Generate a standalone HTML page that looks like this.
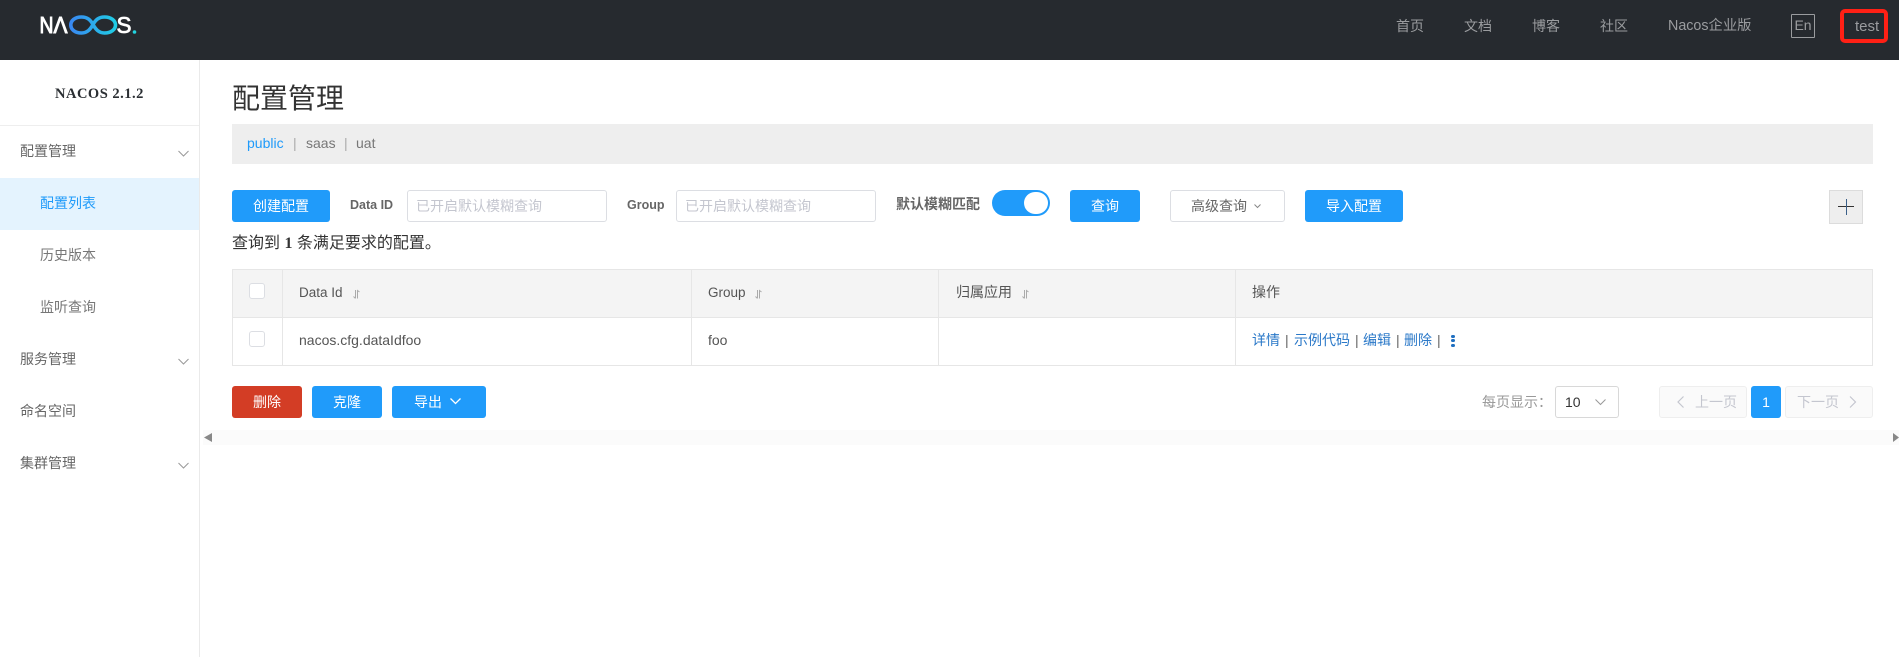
<!DOCTYPE html>
<html lang="zh">
<head>
<meta charset="utf-8">
<title>配置管理</title>
<style>
html,body{margin:0;padding:0;background:#fff;width:1899px;height:657px;overflow:hidden}
body{position:relative;font-family:"Liberation Sans","Noto Sans CJK SC",sans-serif;font-size:14px;color:#333}
.a{position:absolute;box-sizing:border-box}
.t{position:absolute;white-space:nowrap;line-height:20px}
.b{position:absolute;box-sizing:border-box;height:32px;line-height:32px;text-align:center;background:#209bfa;color:#fff;border-radius:3px;top:190px;font-size:14px}
.n{color:#9a9c9f;top:16px}
.m{color:#666;left:20px}
.s{color:#777;left:40px}
.i{position:absolute;box-sizing:border-box;top:190px;height:32px;width:200px;border:1px solid #dcdee3;border-radius:3px;line-height:30px;padding-left:8px;color:#c4c6cf;font-size:14px;background:#fff}
.l{position:absolute;background:#e6e6e6}
.c{position:absolute;box-sizing:border-box;width:16px;height:16px;border:1px solid #dcdee3;border-radius:3px;background:#fff;left:249px}
.o{color:#2a78c8}
.p{color:#777}
svg{position:absolute;overflow:visible}
</style>
</head>
<body>
<div class="a" style="left:0;top:0;width:1899px;height:60px;background:#262a2f"></div>
<svg style="left:0;top:0" width="160" height="60" viewBox="0 0 160 60">
<defs><linearGradient id="g" x1="69" x2="118" y1="0" y2="0" gradientUnits="userSpaceOnUse"><stop offset="0" stop-color="#3a86f2"/><stop offset="1" stop-color="#1ed0e4"/></linearGradient></defs>
<text x="39.500" y="33" font-family="Liberation Sans" font-size="23.500" fill="#fff" stroke="#fff" stroke-width="1" textLength="14" lengthAdjust="spacingAndGlyphs">N</text>
<text x="53.500" y="33" font-family="Liberation Sans" font-size="23.500" fill="#fff" stroke="#fff" stroke-width="1" textLength="14" lengthAdjust="spacingAndGlyphs">Λ</text>
<path d="M93 24.500C90.500 20 87.500 17 81.500 17 75 17 70.800 20.500 70.800 25 70.800 29.500 75 33 81.500 33 87.500 33 90.500 29 93 24.500 95.500 20 98.500 17 104.500 17 111 17 115.500 20.500 115.500 25 115.500 29.500 111 33 104.500 33 98.500 33 95.500 29 93 24.500Z" fill="none" stroke="url(#g)" stroke-width="3.600"/>
<text x="116.500" y="33" font-family="Liberation Sans" font-size="23.500" fill="#fff" stroke="#fff" stroke-width=".8" textLength="15" lengthAdjust="spacingAndGlyphs">S</text>
<circle cx="134.500" cy="32" r="1.800" fill="#22d3e0"/>
</svg>
<div class="t n" style="left:1396px">首页</div>
<div class="t n" style="left:1464px">文档</div>
<div class="t n" style="left:1532px">博客</div>
<div class="t n" style="left:1600px">社区</div>
<div class="t n" style="left:1668px;font-size:14.300px">Nacos企业版</div>
<div class="a" style="left:1791px;top:14px;width:24px;height:24px;border:1px solid #9a9c9f;border-radius:1px;color:#9a9c9f;text-align:center;line-height:20px">En</div>
<div class="a" style="left:1840px;top:9px;width:48px;height:34px;border:4px solid #ff2015;border-radius:5px"></div>
<div class="t n" style="left:1855px;top:17px;font-size:15px">test</div>

<div class="a" style="left:199px;top:60px;width:1px;height:597px;background:#eaeaea"></div>
<div class="t" style="left:55px;top:84px;font-weight:bold;font-size:14.500px;color:#2b2f33;letter-spacing:.5px;font-family:'Liberation Serif',serif">NACOS 2.1.2</div>
<div class="a" style="left:0;top:125px;width:199px;height:1px;background:#eee"></div>
<div class="a" style="left:0;top:178px;width:199px;height:52px;background:#e4f3fe"></div>
<div class="t m" style="top:141px">配置管理</div>
<div class="t s" style="top:193px;color:#209bfa">配置列表</div>
<div class="t s" style="top:245px">历史版本</div>
<div class="t s" style="top:297px">监听查询</div>
<div class="t m" style="top:349px">服务管理</div>
<div class="t m" style="top:401px">命名空间</div>
<div class="t m" style="top:453px">集群管理</div>
<svg style="left:178px;top:150px" width="11" height="7"><path d="M.5 1L5.500 6 10.500 1" fill="none" stroke="#999"/></svg>
<svg style="left:178px;top:358px" width="11" height="7"><path d="M.5 1L5.500 6 10.500 1" fill="none" stroke="#999"/></svg>
<svg style="left:178px;top:462px" width="11" height="7"><path d="M.5 1L5.500 6 10.500 1" fill="none" stroke="#999"/></svg>

<div class="t" style="left:232px;top:81px;font-size:28px;line-height:36px;color:#333">配置管理</div>
<div class="a" style="left:232px;top:124px;width:1641px;height:40px;background:#eee"></div>
<div class="t" style="left:247px;top:133px;color:#209bfa">public</div>
<div class="t" style="left:293px;top:133px;color:#aaa">|</div>
<div class="t" style="left:306px;top:133px;color:#777">saas</div>
<div class="t" style="left:344px;top:133px;color:#aaa">|</div>
<div class="t" style="left:356px;top:133px;color:#777">uat</div>

<div class="b" style="left:232px;width:98px">创建配置</div>
<div class="t" style="left:350px;top:195px;font-weight:bold;font-size:12.500px;color:#666">Data ID</div>
<div class="i" style="left:407px">已开启默认模糊查询</div>
<div class="t" style="left:627px;top:195px;font-weight:bold;font-size:12.500px;color:#666">Group</div>
<div class="i" style="left:676px">已开启默认模糊查询</div>
<div class="t" style="left:896px;top:194px;font-weight:bold;color:#666">默认模糊匹配</div>
<div class="a" style="left:992px;top:190px;width:58px;height:26px;border-radius:13px;background:#209bfa"></div>
<div class="a" style="left:1024px;top:192px;width:24px;height:22px;border-radius:12px;background:#fff"></div>
<div class="b" style="left:1070px;width:70px">查询</div>
<div class="b" style="left:1170px;width:115px;background:#fff;border:1px solid #dcdee3;color:#666;line-height:30px;padding-right:17px">高级查询</div>
<svg style="left:1254px;top:204px" width="7" height="5"><path d="M.5.5L3.500 3.500 6.500.5" fill="none" stroke="#888"/></svg>
<div class="b" style="left:1305px;width:98px">导入配置</div>
<div class="a" style="left:1829px;top:190px;width:34px;height:34px;background:#eee;border:1px solid #dcdcdc"></div>
<div class="a" style="left:1838px;top:206px;width:16px;height:1px;background:#333"></div>
<div class="a" style="left:1846px;top:199px;width:1px;height:16px;background:#3a5f88"></div>

<div class="t" style="left:232px;top:234px;font-size:16px;color:#333">查询到 <b style="font-family:'Liberation Serif',serif">1</b> 条满足要求的配置。</div>

<div class="a" style="left:232px;top:269px;width:1641px;height:48px;background:#f4f4f4"></div>
<div class="l" style="left:232px;top:269px;width:1641px;height:1px"></div>
<div class="l" style="left:232px;top:317px;width:1641px;height:1px"></div>
<div class="l" style="left:232px;top:365px;width:1641px;height:1px"></div>
<div class="l" style="left:232px;top:269px;width:1px;height:97px"></div>
<div class="l" style="left:282px;top:269px;width:1px;height:97px"></div>
<div class="l" style="left:691px;top:269px;width:1px;height:97px"></div>
<div class="l" style="left:938px;top:269px;width:1px;height:97px"></div>
<div class="l" style="left:1235px;top:269px;width:1px;height:97px"></div>
<div class="l" style="left:1872px;top:269px;width:1px;height:97px"></div>
<div class="c" style="top:283px"></div>
<div class="c" style="top:331px"></div>
<div class="t" style="left:299px;top:283px;color:#555;font-size:13.500px">Data Id</div>
<div class="t" style="left:708px;top:283px;color:#555;font-size:13.500px">Group</div>
<div class="t" style="left:956px;top:282px;color:#555">归属应用</div>
<div class="t" style="left:1252px;top:282px;color:#555">操作</div>
<svg style="left:353px;top:290px" width="7" height="9"><path d="M2.500 0V8M.5 6.500L2.500 8.500M4.500 8.500V.5L6.500 2" fill="none" stroke="#aaa"/></svg>
<svg style="left:755px;top:290px" width="7" height="9"><path d="M2.500 0V8M.5 6.500L2.500 8.500M4.500 8.500V.5L6.500 2" fill="none" stroke="#aaa"/></svg>
<svg style="left:1022px;top:290px" width="7" height="9"><path d="M2.500 0V8M.5 6.500L2.500 8.500M4.500 8.500V.5L6.500 2" fill="none" stroke="#aaa"/></svg>
<div class="t" style="left:299px;top:330px;color:#555">nacos.cfg.dataIdfoo</div>
<div class="t" style="left:708px;top:330px;color:#555">foo</div>
<div class="t o" style="left:1252px;top:330px">详情</div>
<div class="t" style="left:1285px;top:330px;color:#666">|</div>
<div class="t o" style="left:1294px;top:330px">示例代码</div>
<div class="t" style="left:1355px;top:330px;color:#666">|</div>
<div class="t o" style="left:1363px;top:330px">编辑</div>
<div class="t" style="left:1396px;top:330px;color:#666">|</div>
<div class="t o" style="left:1404px;top:330px">删除</div>
<div class="t" style="left:1437px;top:330px;color:#666">|</div>
<div class="a" style="left:1451px;top:335px;width:4px;height:3px;border-radius:2px;background:#1f6fc0"></div>
<div class="a" style="left:1451px;top:339px;width:4px;height:3px;border-radius:2px;background:#1f6fc0"></div>
<div class="a" style="left:1451px;top:344px;width:4px;height:3px;border-radius:2px;background:#1f6fc0"></div>

<div class="b" style="left:232px;top:386px;width:70px;background:#d33d25">删除</div>
<div class="b" style="left:312px;top:386px;width:70px">克隆</div>
<div class="b" style="left:392px;top:386px;width:94px;text-align:left;padding-left:22px">导出</div>
<svg style="left:450px;top:398px" width="11" height="7"><path d="M.5.5L5.500 5.500 10.500.5" fill="none" stroke="#fff" stroke-width="1.300"/></svg>

<div class="t" style="left:1482px;top:392px;color:#999">每页显示：</div>
<div class="a" style="left:1555px;top:386px;width:64px;height:32px;border:1px solid #d8d8d8;border-radius:3px"></div>
<div class="t" style="left:1565px;top:392px;color:#333">10</div>
<svg style="left:1595px;top:399px" width="11" height="7"><path d="M.5.5L5.500 5.500 10.500.5" fill="none" stroke="#999"/></svg>
<div class="a" style="left:1659px;top:386px;width:88px;height:32px;border:1px solid #eee;border-radius:3px;background:#fafafa"></div>
<svg style="left:1677px;top:396px" width="8" height="12"><path d="M6.500.5L1 6 6.500 11.500" fill="none" stroke="#c4c6cf" stroke-width="1.200"/></svg>
<div class="t" style="left:1695px;top:392px;color:#c4c6cf">上一页</div>
<div class="b" style="left:1751px;top:386px;width:30px">1</div>
<div class="a" style="left:1785px;top:386px;width:88px;height:32px;border:1px solid #eee;border-radius:3px;background:#fafafa"></div>
<div class="t" style="left:1797px;top:392px;color:#c4c6cf">下一页</div>
<svg style="left:1849px;top:396px" width="8" height="12"><path d="M1 .5L6.500 6 1 11.500" fill="none" stroke="#c4c6cf" stroke-width="1.200"/></svg>

<div class="a" style="left:203px;top:430px;width:1696px;height:15px;background:#fbfbfb"></div>
<svg style="left:204px;top:433px" width="8" height="9"><path d="M0 4.500L8 0V9Z" fill="#888"/></svg>
<svg style="left:1893px;top:433px" width="6" height="9"><path d="M6 4.500L0 0V9Z" fill="#888"/></svg>
</body>
</html>
